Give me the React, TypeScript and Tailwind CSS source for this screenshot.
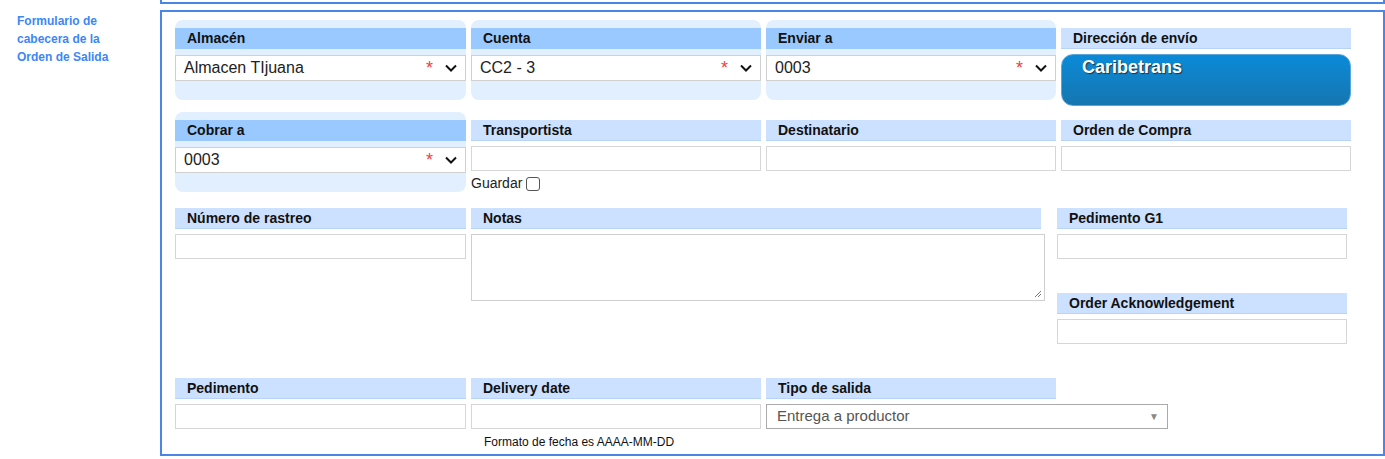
const F = { fontFamily: '"Liberation Sans", Arial, sans-serif' }

function Head({ label, dark, className = "" }: { label: string; dark?: boolean; className?: string }) {
  return (
    <div className={`h-[21px] pl-3 text-[14px] font-bold leading-[21px] text-[#111] ${dark ? "bg-[#99c9ff]" : "bg-[#cce0ff] border-b border-[#b7d3f5]"} ${className}`}>
      {label}
    </div>
  )
}

function Input({ className = "" }: { className?: string }) {
  return <div className={`h-[25px] border border-[#d6d6d6] bg-white ${className}`} />
}

function Sel({ value }: { value: string }) {
  return (
    <div className="flex h-[26px] items-center border border-[#d0d0d0] bg-white pl-2 pr-2 text-[16px] text-[#222]">
      <span className="flex-1">{value}</span>
      <span className="mr-3 text-[18px] leading-none text-[#f04040]">*</span>
      <svg width="12" height="8" viewBox="0 0 12 8"><path d="M1 1.5l5 5 5-5" fill="none" stroke="#111" strokeWidth="2" /></svg>
    </div>
  )
}

function Req({ label, value, tall }: { label: string; value: string; tall?: boolean }) {
  return (
    <div className={`rounded-lg bg-[#e1efff] pt-2 ${tall ? "h-[80px]" : "h-[80px]"}`}>
      <Head label={label} dark />
      <div className="mt-[6px]"><Sel value={value} /></div>
    </div>
  )
}

export default function App() {
  return (
    <div className="flex h-[459px] w-[1385px] overflow-hidden bg-white" style={F}>
      <div className="w-[160px] shrink-0 pl-[17px] pt-[12px] text-[12px] font-bold leading-[18px] text-[#3d86f5]">
        Formulario de<br />cabecera de la<br />Orden de Salida
      </div>
      <div className="flex-1">
        <div className="h-[4px] border-b-2 border-l-2 border-r-2 border-[#4a86e8]" />
        <div className="mt-[6px] h-[446px] border-2 border-[#4a86e8] pl-[13px] pt-[8px]">
          <div className="grid grid-cols-[291px_290px_290px_290px] gap-x-[5px]">
            <Req label="Almacén" value="Almacen TIjuana" />
            <Req label="Cuenta" value="CC2 - 3" />
            <Req label="Enviar a" value="0003" />
            <div className="pt-2">
              <Head label="Dirección de envío" />
              <div className="mt-[5px] h-[52px] rounded-[12px] border border-[#5aa6d6] bg-gradient-to-b from-[#0a8ad8] to-[#1576b0] pl-[20px] text-[18px] font-bold leading-[24px] text-white [text-shadow:1px_1px_1px_#234]">
                Caribetrans
              </div>
            </div>
          </div>
          <div className="mt-[6px] grid grid-cols-[291px_290px_290px_290px] gap-x-[5px]">
            <Req label="Cobrar a" value="0003" />
            <div className="pt-2">
              <Head label="Transportista" />
              <Input className="mt-[5px]" />
              <div className="mt-[2px] flex items-center gap-1 text-[14px] text-[#222]">
                Guardar <span className="inline-block h-[14px] w-[14px] rounded-[3px] border border-[#555]" />
              </div>
            </div>
            <div className="pt-2">
              <Head label="Destinatario" />
              <Input className="mt-[5px]" />
            </div>
            <div className="pt-2">
              <Head label="Orden de Compra" />
              <Input className="mt-[5px]" />
            </div>
          </div>
          <div className="mt-[14px] flex">
            <div className="w-[291px]">
              <Head label="Número de rastreo" />
              <Input className="mt-[5px]" />
            </div>
            <div className="ml-[5px] w-[574px]">
              <Head label="Notas" className="mr-[4px]" />
              <div className="relative mt-[5px] h-[67px] border border-[#cfcfcf] bg-white">
                <svg className="absolute bottom-[2px] right-[2px]" width="8" height="8" viewBox="0 0 8 8"><path d="M7 1L1 7M7 4L4 7" stroke="#777" strokeWidth="1" /></svg>
              </div>
            </div>
            <div className="ml-[12px] w-[290px]">
              <Head label="Pedimento G1" />
              <Input className="mt-[5px]" />
              <Head label="Order Acknowledgement" className="mt-[34px]" />
              <Input className="mt-[5px]" />
            </div>
          </div>
          <div className="mt-[34px] flex gap-x-[5px]">
            <div className="w-[291px]">
              <Head label="Pedimento" />
              <Input className="mt-[5px]" />
            </div>
            <div className="w-[290px]">
              <Head label="Delivery date" />
              <Input className="mt-[5px]" />
              <div className="mt-[4px] pl-[13px] text-[12px] text-[#111]">Formato de fecha es AAAA-MM-DD</div>
            </div>
            <div className="w-[290px]">
              <Head label="Tipo de salida" />
              <div className="mt-[5px] flex h-[25px] w-[402px] items-center border border-[#aaa] bg-white pl-[10px] pr-[8px] text-[15px] text-[#555]">
                <span className="flex-1">Entrega a productor</span>
                <span className="text-[10px] text-[#888]">▼</span>
              </div>
            </div>
          </div>
        </div>
      </div>
    </div>
  )
}
